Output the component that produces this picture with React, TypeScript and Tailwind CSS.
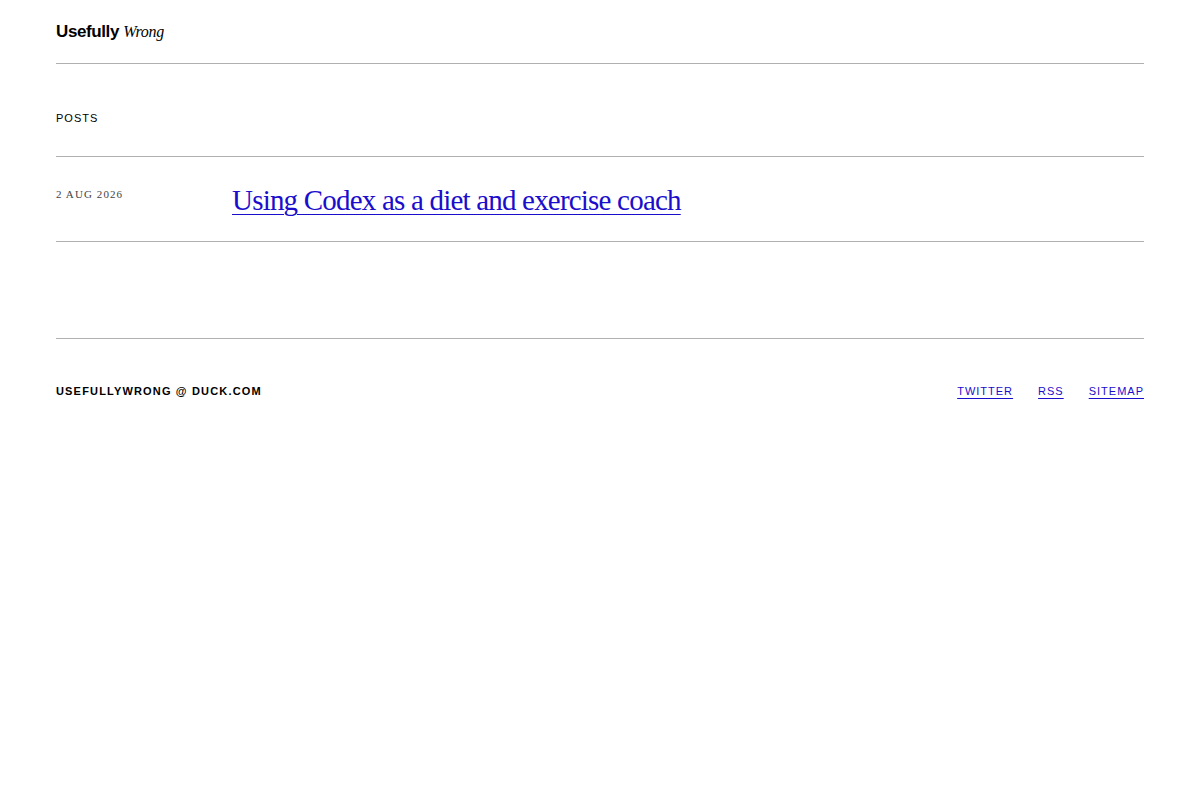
import React from "react";

type Post = { date: string; title: string; href: string };

const posts: Post[] = [
  { date: "2 Aug 2026", title: "Using Codex as a diet and exercise coach", href: "#" },
];

const links = ["Twitter", "RSS", "Sitemap"];

export default function App() {
  return (
    <div className="min-h-screen bg-white px-14 text-black [font-family:'Liberation_Sans',Arial,sans-serif]">
      <header className="flex h-[64px] items-center border-b border-[#b0b0b0]">
        <a href="#" className="text-[17px] leading-none tracking-[-0.4px]">
          <span className="font-bold">Usefully</span>{" "}
          <span className="text-[16px] italic [font-family:'Liberation_Serif',serif] tracking-[-0.3px]">Wrong</span>
        </a>
      </header>

      <main>
        <h2 className="h-[93px] border-b border-[#b0b0b0] pt-[48px] text-[11px] leading-[13px] uppercase tracking-[1px]">
          Posts
        </h2>
        <ul>
          {posts.map((post) => (
            <li key={post.title} className="flex h-[85px] border-b border-[#b0b0b0] pt-[30px]">
              <span className="w-[176px] shrink-0 text-[11px] uppercase tracking-[1.1px] text-[#444] [font-family:'Liberation_Serif',serif] leading-[14px]">
                {post.date}
              </span>
              <a
                href={post.href}
                className="-mt-[3px] text-[29px] leading-[32px] tracking-[-0.8px] text-[#1a0dcc] underline decoration-1 underline-offset-[4px] [font-family:'Liberation_Serif',serif]"
              >
                {post.title}
              </a>
            </li>
          ))}
        </ul>
      </main>

      <footer className="mt-[96px] flex h-[105px] items-center justify-between border-t border-[#b0b0b0]">
        <span className="text-[11px] font-bold uppercase tracking-[1.17px]">usefullywrong @ duck.com</span>
        <nav className="flex gap-[25px]">
          {links.map((l) => (
            <a
              key={l}
              href="#"
              className="text-[11px] uppercase tracking-[1px] text-[#1a0dcc] underline decoration-1 underline-offset-[3px]"
            >
              {l}
            </a>
          ))}
        </nav>
      </footer>
    </div>
  );
}
